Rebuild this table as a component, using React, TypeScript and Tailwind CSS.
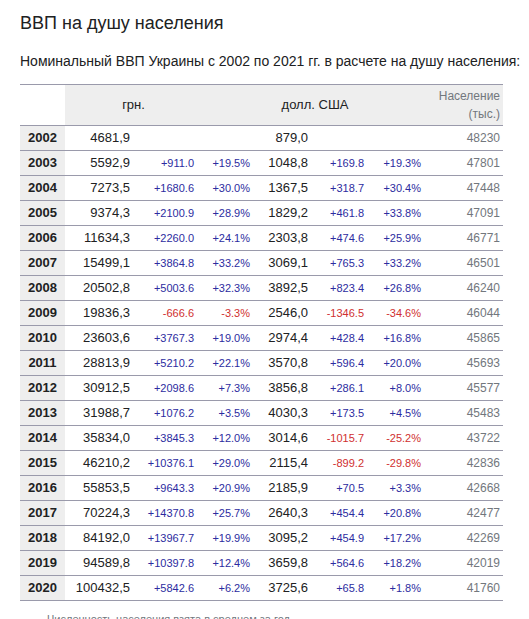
import React from 'react';

type Row = {
    year: number;
    uah: string;
    uahDiff?: string;
    uahPct?: string;
    usd: string;
    usdDiff?: string;
    usdPct?: string;
    pop: string;
};

const rows: Row[] = [
    { year: 2002, uah: '4681,9', usd: '879,0', pop: '48230' },
    { year: 2003, uah: '5592,9', uahDiff: '+911.0', uahPct: '+19.5%', usd: '1048,8', usdDiff: '+169.8', usdPct: '+19.3%', pop: '47801' },
    { year: 2004, uah: '7273,5', uahDiff: '+1680.6', uahPct: '+30.0%', usd: '1367,5', usdDiff: '+318.7', usdPct: '+30.4%', pop: '47448' },
    { year: 2005, uah: '9374,3', uahDiff: '+2100.9', uahPct: '+28.9%', usd: '1829,2', usdDiff: '+461.8', usdPct: '+33.8%', pop: '47091' },
    { year: 2006, uah: '11634,3', uahDiff: '+2260.0', uahPct: '+24.1%', usd: '2303,8', usdDiff: '+474.6', usdPct: '+25.9%', pop: '46771' },
    { year: 2007, uah: '15499,1', uahDiff: '+3864.8', uahPct: '+33.2%', usd: '3069,1', usdDiff: '+765.3', usdPct: '+33.2%', pop: '46501' },
    { year: 2008, uah: '20502,8', uahDiff: '+5003.6', uahPct: '+32.3%', usd: '3892,5', usdDiff: '+823.4', usdPct: '+26.8%', pop: '46240' },
    { year: 2009, uah: '19836,3', uahDiff: '-666.6', uahPct: '-3.3%', usd: '2546,0', usdDiff: '-1346.5', usdPct: '-34.6%', pop: '46044' },
    { year: 2010, uah: '23603,6', uahDiff: '+3767.3', uahPct: '+19.0%', usd: '2974,4', usdDiff: '+428.4', usdPct: '+16.8%', pop: '45865' },
    { year: 2011, uah: '28813,9', uahDiff: '+5210.2', uahPct: '+22.1%', usd: '3570,8', usdDiff: '+596.4', usdPct: '+20.0%', pop: '45693' },
    { year: 2012, uah: '30912,5', uahDiff: '+2098.6', uahPct: '+7.3%', usd: '3856,8', usdDiff: '+286.1', usdPct: '+8.0%', pop: '45577' },
    { year: 2013, uah: '31988,7', uahDiff: '+1076.2', uahPct: '+3.5%', usd: '4030,3', usdDiff: '+173.5', usdPct: '+4.5%', pop: '45483' },
    { year: 2014, uah: '35834,0', uahDiff: '+3845.3', uahPct: '+12.0%', usd: '3014,6', usdDiff: '-1015.7', usdPct: '-25.2%', pop: '43722' },
    { year: 2015, uah: '46210,2', uahDiff: '+10376.1', uahPct: '+29.0%', usd: '2115,4', usdDiff: '-899.2', usdPct: '-29.8%', pop: '42836' },
    { year: 2016, uah: '55853,5', uahDiff: '+9643.3', uahPct: '+20.9%', usd: '2185,9', usdDiff: '+70.5', usdPct: '+3.3%', pop: '42668' },
    { year: 2017, uah: '70224,3', uahDiff: '+14370.8', uahPct: '+25.7%', usd: '2640,3', usdDiff: '+454.4', usdPct: '+20.8%', pop: '42477' },
    { year: 2018, uah: '84192,0', uahDiff: '+13967.7', uahPct: '+19.9%', usd: '3095,2', usdDiff: '+454.9', usdPct: '+17.2%', pop: '42269' },
    { year: 2019, uah: '94589,8', uahDiff: '+10397.8', uahPct: '+12.4%', usd: '3659,8', usdDiff: '+564.6', usdPct: '+18.2%', pop: '42019' },
    { year: 2020, uah: '100432,5', uahDiff: '+5842.6', uahPct: '+6.2%', usd: '3725,6', usdDiff: '+65.8', usdPct: '+1.8%', pop: '41760' },
];

// small coloured delta cell: blue for growth, red for drop
const Delta: React.FC<{ value?: string }> = ({ value }) => (
    <td className={`h-[25px] p-0 pr-2 text-right text-[11px] ${value?.startsWith('-') ? 'text-[#d03030]' : 'text-[#2c2ca0]'}`}>
        {value}
    </td>
);

const App: React.FC = () => {
    return (
        <div className="min-h-screen overflow-hidden bg-white px-5 font-['Liberation_Sans',Arial,sans-serif] text-[#202122]">
            <h2 className="mt-[9px] text-[18px] leading-[28px]">ВВП на душу населения</h2>
            <p className="mt-[14px] whitespace-nowrap text-[14px] leading-[20px]">
                Номинальный ВВП Украины с 2002 по 2021 гг. в расчете на душу населения:
            </p>

            <table className="mt-[13px] w-[483px] table-fixed border-collapse border-t border-[#9a9aab]">
                <colgroup>
                    <col className="w-[45px]" />
                    <col className="w-[73px]" />
                    <col className="w-[64px]" />
                    <col className="w-[56px]" />
                    <col className="w-[58px]" />
                    <col className="w-[56px]" />
                    <col className="w-[57px]" />
                    <col className="w-[74px]" />
                </colgroup>
                <thead>
                    <tr className="border-b border-[#9a9aab]">
                        <th className="h-[41px] bg-white p-0" />
                        <th colSpan={2} className="bg-[#eeeeee] p-0 text-center text-[13px] font-normal">грн.</th>
                        <th className="bg-[#eeeeee] p-0" />
                        <th colSpan={2} className="bg-[#eeeeee] p-0 text-center text-[13px] font-normal">долл. США</th>
                        <th className="bg-[#eeeeee] p-0" />
                        <th className="bg-[#eeeeee] p-0 pr-[3px] text-right text-[12px] font-normal leading-[18px] text-[#72777d]">
                            Население
                            <br />
                            (тыс.)
                        </th>
                    </tr>
                </thead>
                <tbody>
                    {rows.map(r => (
                        <tr key={r.year} className="border-b border-[#9a9aab]">
                            <td className="h-[25px] bg-[#eeeeee] p-0 text-center text-[13px] font-bold">{r.year}</td>
                            <td className="h-[25px] p-0 pr-2 text-right text-[13px]">{r.uah}</td>
                            <Delta value={r.uahDiff} />
                            <Delta value={r.uahPct} />
                            <td className="h-[25px] p-0 pr-2 text-right text-[13px]">{r.usd}</td>
                            <Delta value={r.usdDiff} />
                            <Delta value={r.usdPct} />
                            <td className="h-[25px] p-0 pr-[3px] text-right text-[12px] text-[#72777d]">{r.pop}</td>
                        </tr>
                    ))}
                </tbody>
            </table>

            <p className="mt-[10px] pl-[27px] text-[11px] text-[#72777d]">
                Численность населения взята в среднем за год
            </p>
        </div>
    );
};

export default App;
